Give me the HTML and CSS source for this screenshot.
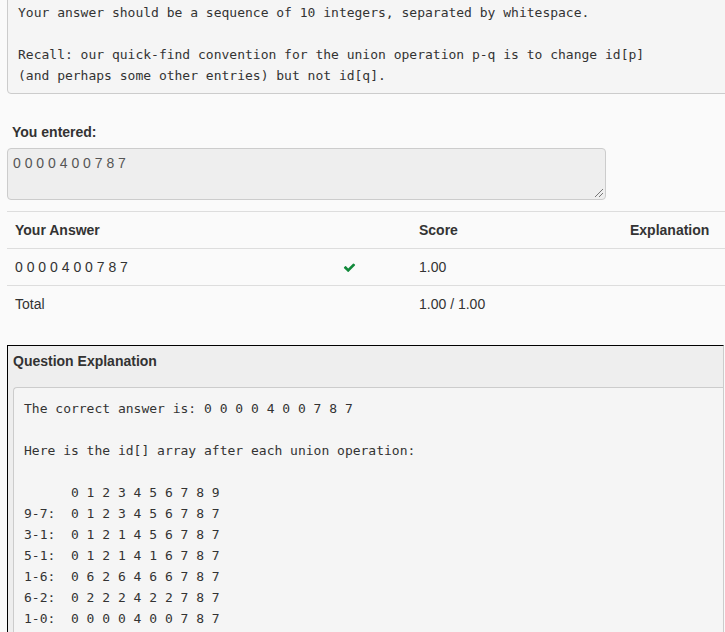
FILE: index.html
```
<!DOCTYPE html>
<html>
<head>
<meta charset="utf-8">
<link rel="stylesheet" href="styles.css">
</head>
<body>
<div class="page">
<pre class="prompt">Your answer should be a sequence of 10 integers, separated by whitespace.

Recall: our quick-find convention for the union operation p-q is to change id[p]
(and perhaps some other entries) but not id[q].</pre>

<div class="entered-label">You entered:</div>
<div class="entered-box">0 0 0 0 4 0 0 7 8 7<span class="grip"></span></div>

<table class="results">
  <colgroup>
    <col class="c1"><col class="c2"><col class="c3"><col class="c4">
  </colgroup>
  <tr class="head">
    <th>Your Answer</th><th></th><th>Score</th><th>Explanation</th>
  </tr>
  <tr>
    <td>0 0 0 0 4 0 0 7 8 7</td>
    <td><svg class="check" viewBox="0 0 1792 1792" width="13" height="13"><path d="M1671 566q0 40-28 68l-724 724-136 136q-28 28-68 28t-68-28l-136-136-362-362q-28-28-28-68t28-68l136-136q28-28 68-28t68 28l294 295 656-657q28-28 68-28t68 28l136 136q28 28 28 68z"/></svg></td>
    <td>1.00</td><td></td>
  </tr>
  <tr>
    <td>Total</td><td></td><td>1.00 / 1.00</td><td></td>
  </tr>
</table>

<div class="explain">
  <div class="explain-head">Question Explanation</div>
<pre class="explain-body">The correct answer is: 0 0 0 0 4 0 0 7 8 7

Here is the id[] array after each union operation:

      0 1 2 3 4 5 6 7 8 9
9-7:  0 1 2 3 4 5 6 7 8 7
3-1:  0 1 2 1 4 5 6 7 8 7
5-1:  0 1 2 1 4 1 6 7 8 7
1-6:  0 6 2 6 4 6 6 7 8 7
6-2:  0 2 2 2 4 2 2 7 8 7
1-0:  0 0 0 0 4 0 0 7 8 7</pre>
</div>
</div>
</body>
</html>
```

FILE: styles.css
```
html, body {
  margin: 0;
  padding: 0;
  background: #fafafa;
  overflow: hidden;
}
body {
  width: 725px;
  height: 632px;
  font-family: "Liberation Sans", Arial, sans-serif;
  font-size: 14px;
  line-height: 20px;
  color: #333;
}
.page {
  padding-left: 7px;
}
.prompt {
  margin: -7px -20px 0 0;
  padding: 8px 10px 7px 10px;
  background: #f5f5f5;
  border: 1px solid #ccc;
  border-radius: 0 0 0 4px;
  font-family: "DejaVu Sans Mono", monospace;
  font-size: 13px;
  line-height: 21px;
  color: #333;
  white-space: pre;
}
.entered-label {
  margin-top: 28px;
  padding-left: 5px;
  font-weight: bold;
  line-height: 20px;
}
.entered-box {
  position: relative;
  margin-top: 6px;
  width: 587px;
  height: 42px;
  padding: 4px 5px 4px 5px;
  background: #eeeeee;
  border: 1px solid #cccccc;
  border-radius: 4px;
  color: #555;
  font-size: 14px;
  line-height: 20px;
}
.grip {
  position: absolute;
  right: 2px;
  bottom: 2px;
  width: 8px;
  height: 8px;
  background: linear-gradient(135deg, transparent 45%, #777 45%, #777 52%, transparent 52%, transparent 70%, #777 70%, #777 77%, transparent 77%);
}
.results {
  margin-top: 11px;
  width: 718px;
  border-collapse: collapse;
  table-layout: fixed;
}
.c1 { width: 328px; }
.c2 { width: 76px; }
.c3 { width: 211px; }
.c4 { width: 103px; }
.results th,
.results td {
  padding: 8px;
  border-top: 1px solid #dddddd;
  text-align: left;
  vertical-align: top;
  line-height: 20px;
  height: 20px;
}
.results th {
  font-weight: bold;
}
.check {
  display: block;
  margin-top: 4px;
  fill: #11893a;
}
.explain {
  margin-top: 23px;
  width: 715px;
  background: #eeeeee;
  border-top: 1px solid #000;
  border-left: 1px solid #000;
  border-right: 1px solid #cccccc;
  padding-bottom: 30px;
}
.explain-head {
  padding: 5px 5px 0 5px;
  font-weight: bold;
  line-height: 20px;
}
.explain-body {
  margin: 16px 0 0 5px;
  padding: 10px 10px;
  background: #f5f5f5;
  border: 1px solid #cccccc;
  border-right: none;
  border-radius: 4px 0 0 0;
  font-family: "DejaVu Sans Mono", monospace;
  font-size: 13px;
  line-height: 21px;
  color: #333;
  white-space: pre;
}
```
